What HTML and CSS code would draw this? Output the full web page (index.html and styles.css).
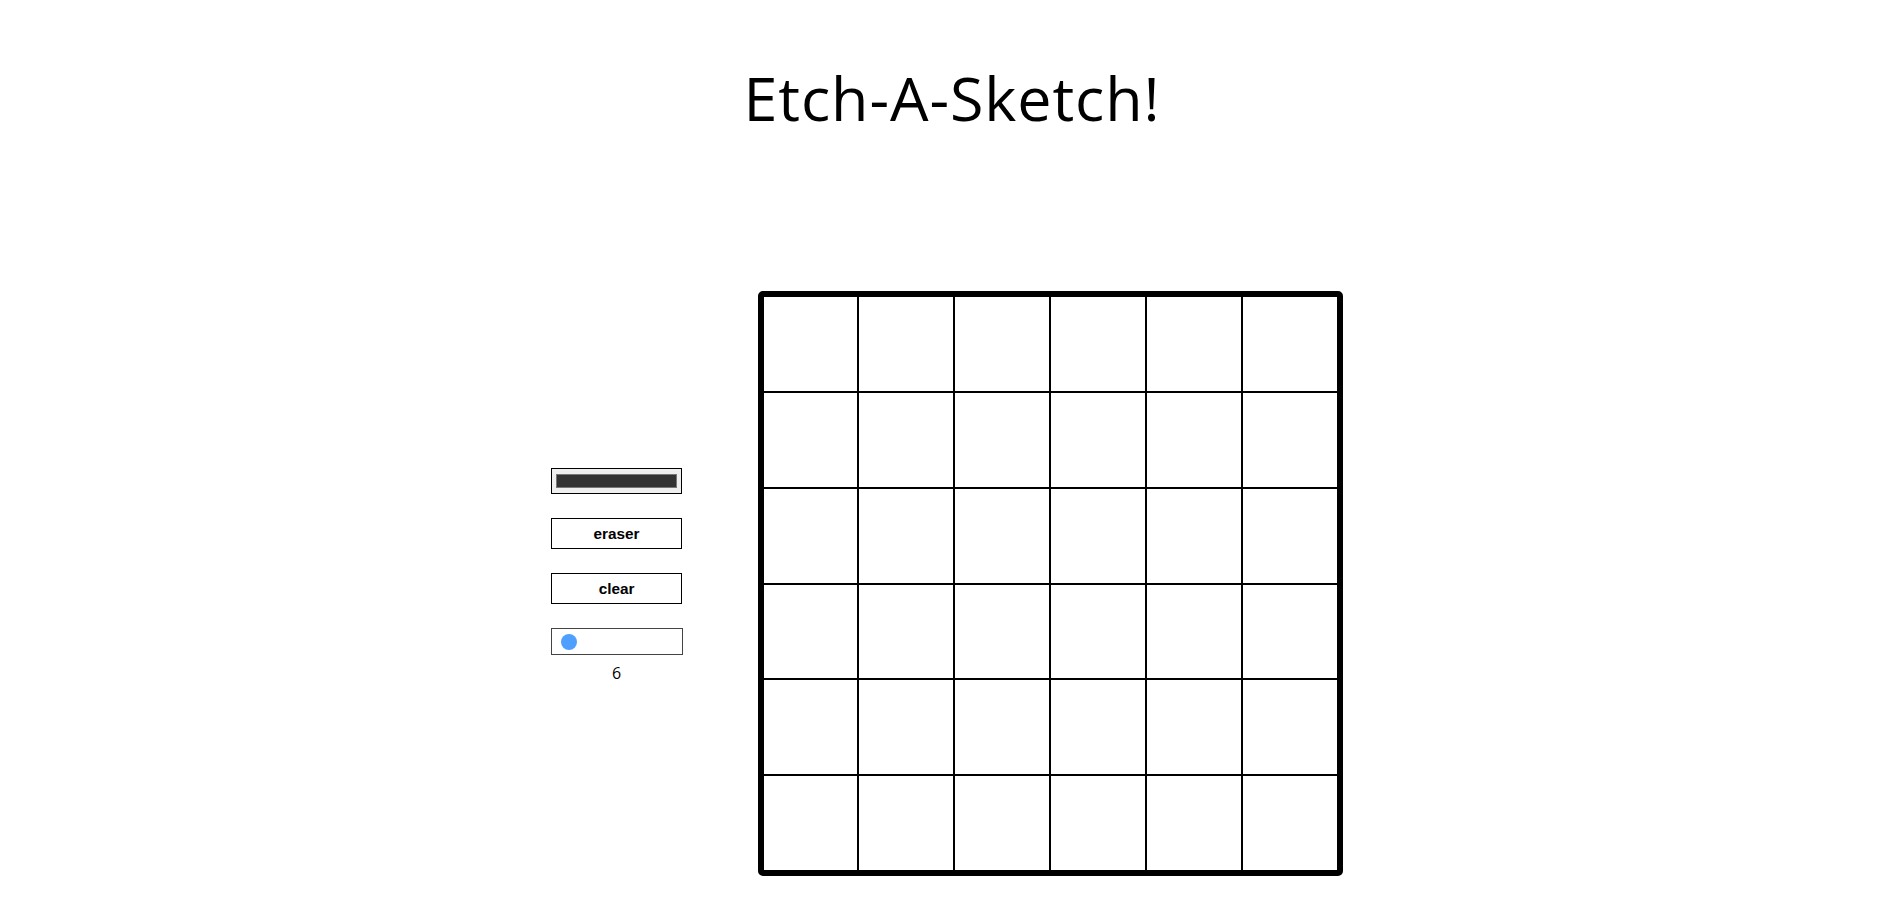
FILE: index.html
```html
<!DOCTYPE html>
<html lang="en">
<head>
<meta charset="utf-8">
<title>Etch-A-Sketch!</title>
<link rel="stylesheet" href="styles.css">
</head>
<body>
<h1 class="title">Etch-A-Sketch!</h1>
<main class="main">
  <div class="controls">
    <input class="color-picker" type="color" value="#333333">
    <button class="btn" type="button">eraser</button>
    <button class="btn" type="button">clear</button>
    <input class="slider" type="range" min="1" max="100" value="6">
    <div class="size-label">6</div>
  </div>
  <div class="board">
    <div class="cell"></div><div class="cell"></div><div class="cell"></div><div class="cell"></div><div class="cell"></div><div class="cell"></div>
    <div class="cell"></div><div class="cell"></div><div class="cell"></div><div class="cell"></div><div class="cell"></div><div class="cell"></div>
    <div class="cell"></div><div class="cell"></div><div class="cell"></div><div class="cell"></div><div class="cell"></div><div class="cell"></div>
    <div class="cell"></div><div class="cell"></div><div class="cell"></div><div class="cell"></div><div class="cell"></div><div class="cell"></div>
    <div class="cell"></div><div class="cell"></div><div class="cell"></div><div class="cell"></div><div class="cell"></div><div class="cell"></div>
    <div class="cell"></div><div class="cell"></div><div class="cell"></div><div class="cell"></div><div class="cell"></div><div class="cell"></div>
  </div>
</main>
</body>
</html>
```
FILE: styles.css
```css
* { box-sizing: border-box; }
html, body { margin: 0; padding: 0; background: #fff; }
body { font-family: "Open Sans", "Noto Sans", sans-serif; color: #000; }

.title {
  margin: 0;
  padding-top: 58px;
  font-size: 61px;
  font-weight: 400;
  letter-spacing: 0.9px;
  line-height: 80px;
  text-align: center;
}

.main {
  display: flex;
  justify-content: center;
  align-items: center;
  gap: 75px;
  margin-top: 153px;
  padding-right: 11px;
}

.controls {
  display: flex;
  flex-direction: column;
  align-items: center;
  width: 132px;
  margin-bottom: 17px;
}

.color-picker {
  width: 131px;
  height: 26px;
  margin: 0;
  padding: 1px 2px;
  border: 1px solid #000;
  background: #efefef;
  cursor: pointer;
}

.btn {
  width: 131px;
  height: 31px;
  margin: 24px 0 0;
  padding: 0;
  border: 1px solid #000;
  background: #fff;
  color: #000;
  font-family: "Liberation Sans", Arial, sans-serif;
  font-size: 15.3px;
  font-weight: 700;
}

.slider {
  -webkit-appearance: none;
  appearance: none;
  width: 132px;
  height: 27px;
  margin: 24px 0 0;
  padding: 0 4px;
  border: 1px solid #444;
  background: #fff;
}
.slider::-webkit-slider-runnable-track { height: 16px; background: transparent; }
.slider::-webkit-slider-thumb {
  -webkit-appearance: none;
  appearance: none;
  width: 16px;
  height: 16px;
  border-radius: 50%;
  background: #4f9fff;
  border: none;
}

.size-label {
  margin-top: 9px;
  font-size: 16px;
  line-height: 18px;
  text-align: center;
}

.board {
  display: grid;
  grid-template-columns: repeat(6, 1fr);
  grid-template-rows: repeat(6, 1fr);
  width: 585px;
  height: 585px;
  border: 5px solid #000;
  border-radius: 5px;
  overflow: hidden;
}

.cell {
  border: 1px solid #000;
  background: #fff;
}
```
